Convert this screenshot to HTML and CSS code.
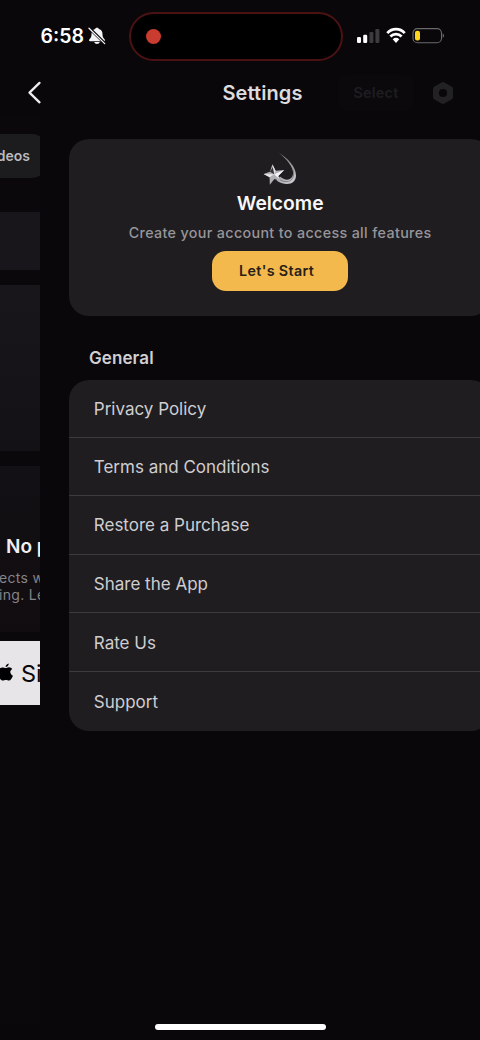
FILE: index.html
```html
<!DOCTYPE html>
<html lang="en">
<head>
<meta charset="utf-8">
<title>Settings</title>
<link rel="stylesheet" href="styles.css">
</head>
<body>
<div class="phone">
  <div class="status">
    <div class="clock"><span class="time">6:58</span>
      <svg class="bell" width="18" height="18" viewBox="0 0 18 18"><path fill="#f4f3f5" d="M9 .8c-1.100 0-1.800.6-1.900 1.300C4.300 2.900 3.500 5 3.500 7.300c0 2.500-.7 3.700-2.200 5.200-.6.700-.2 1.700.6 1.700h14.200c.8 0 1.200-1 .6-1.700C15.200 11 14.500 9.800 14.500 7.300c0-2.300-.8-4.400-3.600-5.200C10.800 1.400 10.100.8 9 .8zM6.200 15.100c.3 1.200 1.500 1.900 2.800 1.900s2.500-.7 2.800-1.900z"/><path d="M1.300 1.100 17 16.500" stroke="#09080a" stroke-width="3"/><path d="M1 1.200 16.700 16.600" stroke="#f4f3f5" stroke-width="1.300" stroke-linecap="round"/></svg>
    </div>
    <div class="island"><span class="rec"></span></div>
    <svg class="signals" width="90" height="20" viewBox="0 0 90 20">
      <g fill="#fff"><rect x="1" y="11" width="4" height="6" rx="1.200"/><rect x="7.200" y="8.700" width="4" height="8.300" rx="1.200"/></g>
      <g fill="#3c3b3e"><rect x="13.400" y="6" width="4" height="11" rx="1.200"/><rect x="19.400" y="3" width="4" height="14" rx="1.200"/></g>
      <g fill="none" stroke="#fff" stroke-width="2.700"><path d="M31.300 7.100a11.500 11.500 0 0 1 17.400 0"/><path d="M34.400 10.500a7.700 7.700 0 0 1 11.200 0"/></g><path fill="#fff" d="M36.700 13.200a5 5 0 0 1 6.600 0L40 16.900z"/>
      <rect x="57" y="2.600" width="28.500" height="14.200" rx="4.500" fill="none" stroke="#69686b" stroke-width="1.100"/><rect x="59" y="4.800" width="5" height="9.800" rx="2" fill="#fdd51d"/><path d="M86.700 7.200q2.800 2.400 0 4.800z" fill="#69686b"/>
    </svg>
  </div>
  <div class="nav">
    <svg class="back" width="18" height="26" viewBox="0 0 18 26"><path d="M14.500 2.900 4.500 12.600 14.500 22.300" fill="none" stroke="#edecee" stroke-width="2.300" stroke-linecap="round" stroke-linejoin="round"/></svg>
    <h1 class="title">Settings</h1>
    <div class="select">Select</div>
    <svg class="gear" width="24" height="24" viewBox="0 0 24 24"><path fill="#222124" fill-rule="evenodd" d="M10.500 1.500q1.500-.8 3 0l7 4q1.500.9 1.500 2.500v8q0 1.600-1.500 2.500l-7 4q-1.500.8-3 0l-7-4Q2 17.600 2 16V8q0-1.600 1.500-2.500zM12 7.900a4.100 4.100 0 1 0 0 8.200 4.100 4.100 0 0 0 0-8.200z"/></svg>
  </div>
  <div class="stage">
    <div class="peek">
      <div class="chip">Videos</div>
      <div class="block short"></div>
      <div class="block tall"></div>
      <div class="block empty">
        <div class="empty-title">No projects</div>
        <div class="empty-text"><div>ects will</div><div>ing. Let's</div></div>
      </div>
      <div class="signin">
        <svg class="apple" width="17" height="20" viewBox="0 0 17 20"><path d="M11.700.5c.2 1.500-1.400 3.600-3.100 3.600C8.400 2.400 10.100.8 11.700.5zM8.700 5.100c.8 0 1.700-1 3.300-.9 1.400.1 2.500.7 3.200 1.700-2.800 1.700-2.400 5.600.7 6.800-.8 2.200-2.300 4.900-4 4.900-1.100 0-1.600-.7-3-.7s-1.900.7-3 .7C3.400 17.700 1 13.200 1 9.700c0-3.400 2.200-5.300 4.400-5.300 1.500 0 2.400.8 3.300.7z"/></svg>
        <span>Sign in</span>
      </div>
    </div>
    <div class="sheet">
      <section class="card welcome">
        <svg class="star" width="34" height="34" viewBox="0 0 34 34">
          <defs><linearGradient id="tail" x1="0" y1="0" x2=".5" y2="1"><stop offset="0" stop-color="#77767a"/><stop offset=".6" stop-color="#98979b"/><stop offset="1" stop-color="#c5c4c8"/></linearGradient></defs>
          <path fill="url(#tail)" d="M15.500.5C24.500 6 33 14.500 33 23.500c0 5-3.600 8.500-9 8.500-4 0-7.500-1.400-10.500-3.500l3.500-4c3 2.700 6.300 3.800 9.300 2.800 3-1.200 4.300-4.300 3.700-7.800C29 13.500 23 6.500 15.500.5z"/>
          <path fill="none" stroke="#58575b" stroke-width=".6" d="M17.500 28c4.500 2.600 9 2 11.500-1 2-2.600 2.200-6.500.6-10.500"/>
          <path fill="#b0afb3" d="m9.400 12.300 3.200 6.400 8.600-.6-6 5.900 2 4.900-5.800-1.800-4.600 5.700-.2-7.600L.6 22l6.300-2.200z"/>
          <path fill="#e6e5e8" d="m9.400 12.300 1.800 9.900 1.400-3.500zM.6 22l10.600.2-4.600 3z"/>
          <path fill="#343337" d="m6.900 19.800 4.300 2.400-1.400-7z"/>
          <path fill="#f5f4f6" d="m11.200 22.200 10-4.100-6 5.900 1 3z"/>
        </svg>
        <h2 class="welcome-title">Welcome</h2>
        <p class="welcome-text">Create your account to access all features</p>
        <button class="start">Let's Start</button>
      </section>
      <h3 class="group">General</h3>
      <ul class="card list">
        <li>Privacy Policy</li>
        <li>Terms and Conditions</li>
        <li>Restore a Purchase</li>
        <li>Share the App</li>
        <li>Rate Us</li>
        <li>Support</li>
      </ul>
    </div>
  </div>
  <div class="home"></div>
</div>
</body>
</html>
```
FILE: styles.css
```css
* { box-sizing: border-box; margin: 0; padding: 0; }
body { background: #09070a; font-family: Inter, "Liberation Sans", sans-serif; color: #d6d4d7; }
.phone { width: 480px; height: 1040px; display: flex; flex-direction: column; overflow: hidden; background: #09070a; }
.status { height: 72px; display: grid; grid-template-columns: 129px 214px 1fr; align-items: center; flex: none; }
.clock { display: flex; align-items: center; padding-left: 40.5px; gap: 4px; color: #fff; }
.time { font-size: 19.5px; font-weight: 600; line-height: 24px; }
.bell { flex: none; }
.island { height: 49px; border: 2px solid #4b1214; border-radius: 24.5px; background: #000; display: flex; align-items: center; padding-left: 15px; }
.rec { width: 15px; height: 15px; border-radius: 50%; background: #ca3b30; }
.signals { margin-left: 13px; }
.nav { height: 42px; display: grid; grid-template-columns: 200px 125px 102px 1fr; align-items: center; flex: none; }
.back { margin-left: 25px; }
.title { font-size: 20px; font-weight: 600; line-height: 24px; letter-spacing: .1px; text-align: center; color: #dddbde; }
.select { width: 74px; height: 36px; margin-left: 14px; border-radius: 8px; background: #0b090c; color: #1e1d20; font-size: 14.5px; font-weight: 600; line-height: 36px; text-align: center; letter-spacing: .2px; }
.gear { margin-left: 4px; }
.stage { flex: 1; display: grid; grid-template-columns: 40px 440px; min-height: 0; }
.peek { overflow: hidden; padding-top: 20px; background: #0a080b; white-space: nowrap; }
.chip { width: 96px; height: 44px; margin-left: -50px; padding-right: 16px; border-radius: 14px; background: #1c1b1e; color: #bbb9bc; font-size: 14px; font-weight: 600; line-height: 44px; text-align: right; }
.block { background: #18161a; }
.short { height: 58px; margin-top: 34px; }
.tall { height: 166px; margin-top: 15px; background: linear-gradient(#18161a, #131115); }
.empty { height: 166px; margin-top: 15px; padding-top: 69px; background: linear-gradient(#121014, #110c10); }
.empty-title { padding-left: 6px; font-size: 19px; font-weight: 600; line-height: 24px; color: #f0eef1; }
.empty-text { margin-top: 10px; margin-left: -1px; font-size: 14px; line-height: 17px; letter-spacing: .3px; color: #858387; }
.signin { width: 60px; height: 64px; margin-top: 9.4px; background: #e7e5e8; color: #080709; display: flex; align-items: center; gap: 7px; font-size: 23.5px; }
.apple { margin-left: -3px; flex: none; }
.sheet { overflow: hidden; padding: 25px 0 0 29.4px; }
.card { width: 421.5px; background: #1f1d20; border-radius: 20px; }
.welcome { height: 176.5px; display: flex; flex-direction: column; align-items: center; padding-top: 13px; }
.star { flex: none; }
.welcome-title { margin-top: 5px; font-size: 19.3px; font-weight: 600; line-height: 24px; color: #f8f7f9; }
.welcome-text { margin-top: 9px; font-size: 14.3px; font-weight: 500; line-height: 18px; letter-spacing: .35px; color: #979599; white-space: nowrap; }
.start { width: 136px; height: 40px; margin-top: 9px; padding-right: 7px; border: 0; border-radius: 14px; background: #f4b94d; color: #282018; font: 600 14.3px/40px Inter, "Liberation Sans", sans-serif; letter-spacing: .35px; }
.group { margin: 31px 0 0 19.600px; font-size: 17px; font-weight: 600; line-height: 22px; letter-spacing: .1px; color: #d1cfd2; }
.list { margin-top: 11px; height: 351px; list-style: none; display: grid; grid-template-rows: 58px repeat(5, 58.6px); }
.list li { display: flex; align-items: center; padding: 1px 0 0 24.4px; font-size: 17px; color: #cfcdd0; border-bottom: 1px solid #3d3b3e; }
.list li:last-child { border-bottom: 0; }
.home { width: 171px; height: 6px; margin: 0 auto 10px; flex: none; border-radius: 3px; background: #fff; }
```
